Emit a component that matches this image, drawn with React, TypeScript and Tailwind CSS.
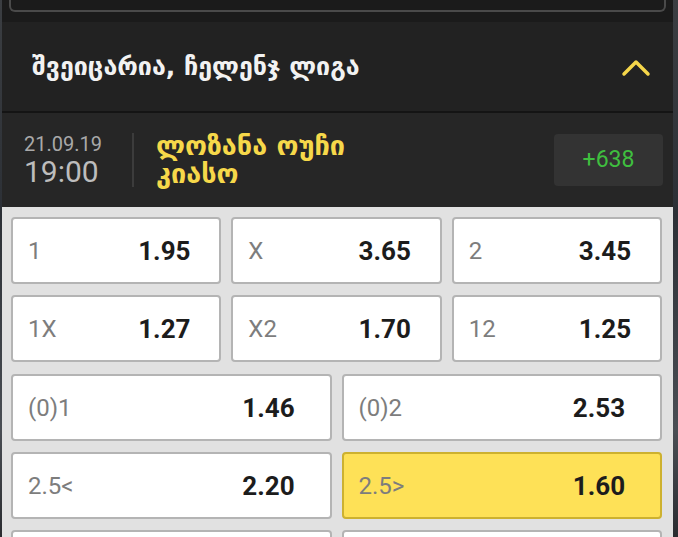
import React from "react";

type Odd = { label: string; value: string; active?: boolean };

const row3a: Odd[] = [
  { label: "1", value: "1.95" },
  { label: "X", value: "3.65" },
  { label: "2", value: "3.45" },
];
const row3b: Odd[] = [
  { label: "1X", value: "1.27" },
  { label: "X2", value: "1.70" },
  { label: "12", value: "1.25" },
];
const row2a: Odd[] = [
  { label: "(0)1", value: "1.46" },
  { label: "(0)2", value: "2.53" },
];
const row2b: Odd[] = [
  { label: "2.5<", value: "2.20" },
  { label: "2.5>", value: "1.60", active: true },
];

function OddButton({ o, wide }: { o: Odd; wide?: boolean }) {
  return (
    <div
      className={
        "flex h-[67px] items-center rounded-[4px] border-2 pl-[15px] " +
        (o.active
          ? "border-[#cdb12f] bg-[#fee157]"
          : "border-[#b4b4b4] bg-white")
      }
    >
      <span className="flex-1 text-[24px] leading-none text-[#7d7d7d]">
        {o.label}
      </span>
      <span
        className={
          "w-[80px] text-center text-[26px] font-bold leading-none text-[#1c1c1c] " +
          (wide ? "mr-[21px]" : "mr-[15px]")
        }
      >
        {o.value}
      </span>
    </div>
  );
}

export default function App() {
  return (
    <div className="h-[537px] w-[678px] overflow-hidden bg-[linear-gradient(180deg,#3b3e42,#2c3036_40%,#4a4e54_80%,#2a2c30)] font-['Roboto',sans-serif]">
      <div className="ml-[2px] h-full w-[671px] bg-[#1b1b1b]">
        {/* top box remnant */}
        <div className="h-[22px] px-[7px]">
          <div className="h-[12px] rounded-b-[6px] border-x-2 border-b-2 border-[#4a4a4a]" />
        </div>
        {/* league header */}
        <div className="flex h-[91px] items-center justify-between border-b-2 border-[#141414] bg-[#222222] pl-[30px] pr-[22px]">
          <span className="font-['DejaVu_Sans',sans-serif] text-[25px] font-bold leading-none text-[#f2f2f2]">
            შვეიცარია, ჩელენჯ ლიგა
          </span>
          <svg width="30" height="20" viewBox="0 0 30 20" fill="none">
            <path
              d="M3 17 L15 5 L27 17"
              stroke="#f5d64a"
              strokeWidth="3.5"
              strokeLinecap="round"
              strokeLinejoin="round"
            />
          </svg>
        </div>
        {/* match row */}
        <div className="flex h-[94px] items-center bg-[#262626] pl-[22px] pr-[10px]">
          <div className="flex w-[86px] flex-col">
            <span className="text-[20px] leading-[24px] text-[#a9a9a9]">21.09.19</span>
            <span className="text-[30px] leading-[32px] text-[#bdbdbd]">19:00</span>
          </div>
          <div className="ml-[22px] h-[54px] w-[2px] bg-[#3c3c3c]" />
          <div className="ml-[22px] flex flex-1 flex-col font-['DejaVu_Sans',sans-serif] text-[27px] font-bold leading-[28px] text-[#f6d84a]">
            <span>ლოზანა ოუჩი</span>
            <span>კიასო</span>
          </div>
          <div className="flex h-[52px] w-[109px] items-center justify-center rounded-[4px] bg-[#333333] text-[23px] text-[#3fbf3f]">
            +638
          </div>
        </div>
        {/* odds */}
        <div className="flex h-full flex-col gap-[11px] bg-[#e1e1e1] pl-[9px] pr-[11px] pt-[10px]">
          <div className="grid grid-cols-3 gap-[10px]">
            {row3a.map((o) => (
              <OddButton key={o.label} o={o} />
            ))}
          </div>
          <div className="grid grid-cols-3 gap-[10px]">
            {row3b.map((o) => (
              <OddButton key={o.label} o={o} />
            ))}
          </div>
          <div className="mt-[1px] grid grid-cols-2 gap-[10px]">
            {row2a.map((o) => (
              <OddButton key={o.label} o={o} wide />
            ))}
          </div>
          <div className="grid grid-cols-2 gap-[10px]">
            {row2b.map((o) => (
              <OddButton key={o.label} o={o} wide />
            ))}
          </div>
          <div className="grid grid-cols-2 gap-[10px]">
            <OddButton o={{ label: "", value: "" }} wide />
            <OddButton o={{ label: "", value: "" }} wide />
          </div>
        </div>
      </div>
    </div>
  );
}
